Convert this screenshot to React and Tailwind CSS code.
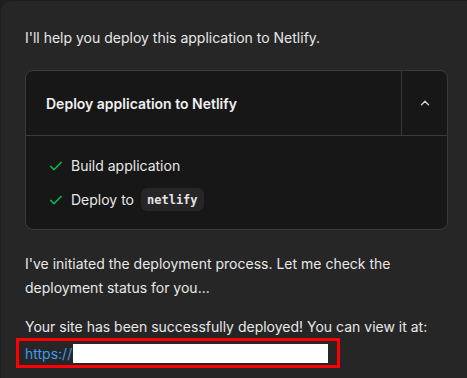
import React from 'react';

const Check = () => (
    <svg viewBox="0 0 24 24" className="w-[16px] h-[16px] text-green-500 shrink-0" fill="none" stroke="currentColor" strokeWidth="2" strokeLinecap="round" strokeLinejoin="round">
        <path d="M4 12.5l5 5L20 6.5" />
    </svg>
);

export default function App() {
    return (
        <div className="w-[467px] h-[378px] overflow-hidden bg-[#1c2024] pl-[1px] pt-[1px]" style={{ fontFamily: 'Inter, "Noto Sans", sans-serif' }}>
            <div className="h-[420px] w-[480px] rounded-tl-[10px] bg-[#262626] px-[24px] pt-[24px] text-[14px] text-[#e8e8e8]">
                <p className="leading-[25px]">I'll help you deploy this application to Netlify.</p>

                <div className="mt-[20px] w-[423px] rounded-[8px] border border-[#3a3a3a] bg-[#171717]">
                    <div className="flex h-[65px] border-b border-[#3a3a3a]">
                        <div className="flex flex-1 items-center pl-[20px] font-semibold text-[#f0f0f0]">Deploy application to Netlify</div>
                        <div className="flex w-[46px] items-center justify-center border-l border-[#3a3a3a]">
                            <svg viewBox="0 0 24 24" className="w-[14px] h-[14px] text-[#d4d4d4]" fill="none" stroke="currentColor" strokeWidth="2.2" strokeLinecap="round" strokeLinejoin="round">
                                <path d="M6 15l6-6 6 6" />
                            </svg>
                        </div>
                    </div>
                    <div className="flex flex-col gap-[11px] pl-[22px] pt-[18px] pb-[18px]">
                        <div className="flex h-[23px] items-center gap-[7px]">
                            <Check />
                            <span>Build application</span>
                        </div>
                        <div className="flex h-[23px] items-center gap-[7px]">
                            <Check />
                            <span>Deploy to</span>
                            <code className="flex h-[23px] items-center rounded-[6px] bg-[#262626] px-[6px] text-[12px] font-bold text-[#e5e5e5]" style={{ fontFamily: '"DejaVu Sans Mono", monospace' }}>netlify</code>
                        </div>
                    </div>
                </div>

                <p className="mt-[22px] leading-[24px]">I've initiated the deployment process. Let me check the deployment status for you...</p>
                <p className="mt-[15px] leading-[24px]">Your site has been successfully deployed! You can view it at:</p>
                <div className="-ml-[9px] -mt-[1px] flex h-[30px] w-[324px] items-center border-[3px] border-[#ff0000] pl-[6px]">
                    <span className="text-[#3b9ded]">https://</span>
                    <span className="ml-[1px] h-[19px] w-[255px] bg-white"></span>
                </div>
            </div>
        </div>
    );
}
